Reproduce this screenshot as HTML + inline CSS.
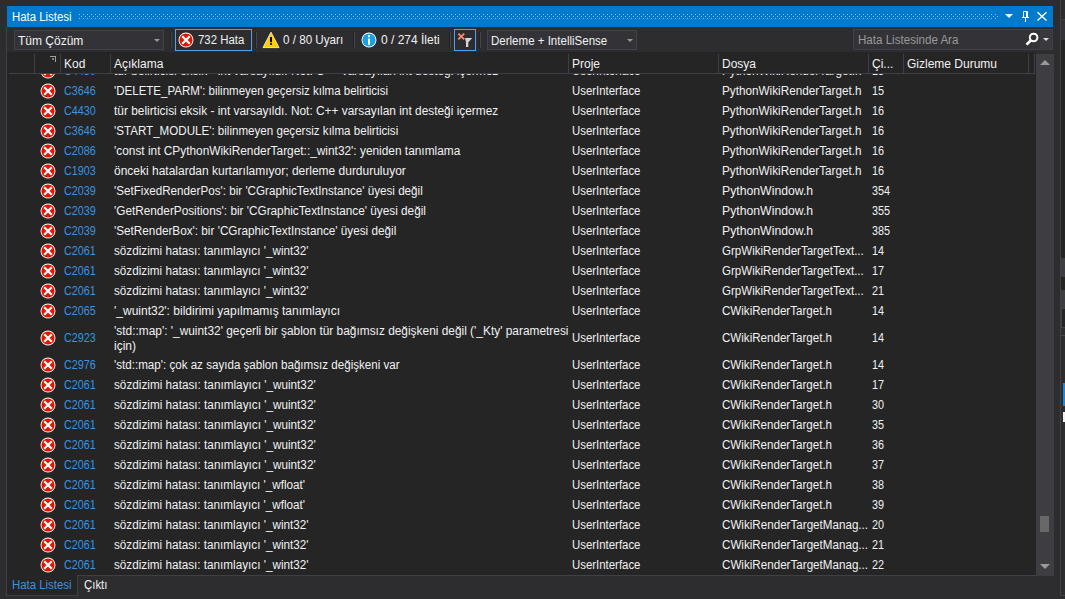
<!DOCTYPE html>
<html><head><meta charset="utf-8"><style>
html,body{margin:0;padding:0}
body{width:1065px;height:599px;overflow:hidden;background:#2D2D30;position:relative;font-family:"Liberation Sans",sans-serif;font-size:12px;color:#F1F1F1}
.abs{position:absolute}
div,span{box-sizing:border-box}
#title{position:absolute;left:7px;top:6px;width:1046px;height:21px;background:#007ACC}
#title .t{position:absolute;left:5px;top:3px;line-height:16px;color:#fff;white-space:nowrap;transform:scaleX(0.95);transform-origin:0 0}
.combo{position:absolute;background:#333337;border:1px solid #434346;height:20px}
.combo .t{position:absolute;left:3px;top:2px;line-height:17px;white-space:nowrap;transform-origin:0 0}
.arrow{position:absolute;width:0;height:0;border-left:3px solid transparent;border-right:3px solid transparent;border-top:3px solid #999}
.sep{position:absolute;top:32px;height:16px;width:2px;border-left:1px solid #222225;border-right:1px solid #46464A}
.btn{position:absolute;top:29px;height:22px;border:1px solid #4DA3F2}
.tb{position:absolute;top:33px;line-height:14px;white-space:nowrap;transform-origin:0 0}
#list{position:absolute;left:7px;top:52px;width:1029px;height:523px;background:#252526;overflow:hidden}
#rows{position:absolute;left:0;top:0;width:1029px;height:523px;overflow:hidden}
.row{position:absolute;left:0;width:1029px}
.row .c{position:absolute;top:0;line-height:20px;white-space:nowrap;transform-origin:0 0}
.row.two .c{line-height:20px;top:7px}
.row.two .desc{line-height:15px;top:3px}
.row.two .d2{top:18px}
.ic{position:absolute;left:33px;width:16px;height:16px}
.ic svg{display:block}
.code{left:57px;color:#3794E0;transform:scaleX(0.9)}
.desc{left:107px}
.proj{left:565px;transform:scaleX(0.95)}
.file{left:715px}
.line{left:865px;transform:scaleX(0.9)}
#hdr{position:absolute;left:0;top:2px;width:1029px;height:20px;background:#252526}
#hdr .h{position:absolute;top:1px;line-height:19px;white-space:nowrap}
#hdr .v{position:absolute;top:0;width:1px;height:20px;background:#3F3F46}
#hdr .b{position:absolute;left:2px;top:19px;width:1026px;height:1px;background:#3F3F46}
#sb{position:absolute;left:1036px;top:54px;width:18px;height:522px;background:#3E3E42}

</style></head><body>
<div class="abs" style="left:6px;top:27px;width:1px;height:569px;background:#3F3F46"></div>
<div id="title"><span class="t">Hata Listesi</span></div>
<svg class="abs" style="left:0;top:0" width="1065" height="30"><g fill="#8CC4EE"><rect x="79" y="14" width="1" height="1"/><rect x="83" y="14" width="1" height="1"/><rect x="87" y="14" width="1" height="1"/><rect x="91" y="14" width="1" height="1"/><rect x="95" y="14" width="1" height="1"/><rect x="99" y="14" width="1" height="1"/><rect x="103" y="14" width="1" height="1"/><rect x="107" y="14" width="1" height="1"/><rect x="111" y="14" width="1" height="1"/><rect x="115" y="14" width="1" height="1"/><rect x="119" y="14" width="1" height="1"/><rect x="123" y="14" width="1" height="1"/><rect x="127" y="14" width="1" height="1"/><rect x="131" y="14" width="1" height="1"/><rect x="135" y="14" width="1" height="1"/><rect x="139" y="14" width="1" height="1"/><rect x="143" y="14" width="1" height="1"/><rect x="147" y="14" width="1" height="1"/><rect x="151" y="14" width="1" height="1"/><rect x="155" y="14" width="1" height="1"/><rect x="159" y="14" width="1" height="1"/><rect x="163" y="14" width="1" height="1"/><rect x="167" y="14" width="1" height="1"/><rect x="171" y="14" width="1" height="1"/><rect x="175" y="14" width="1" height="1"/><rect x="179" y="14" width="1" height="1"/><rect x="183" y="14" width="1" height="1"/><rect x="187" y="14" width="1" height="1"/><rect x="191" y="14" width="1" height="1"/><rect x="195" y="14" width="1" height="1"/><rect x="199" y="14" width="1" height="1"/><rect x="203" y="14" width="1" height="1"/><rect x="207" y="14" width="1" height="1"/><rect x="211" y="14" width="1" height="1"/><rect x="215" y="14" width="1" height="1"/><rect x="219" y="14" width="1" height="1"/><rect x="223" y="14" width="1" height="1"/><rect x="227" y="14" width="1" height="1"/><rect x="231" y="14" width="1" height="1"/><rect x="235" y="14" width="1" height="1"/><rect x="239" y="14" width="1" height="1"/><rect x="243" y="14" width="1" height="1"/><rect x="247" y="14" width="1" height="1"/><rect x="251" y="14" width="1" height="1"/><rect x="255" y="14" width="1" height="1"/><rect x="259" y="14" width="1" height="1"/><rect x="263" y="14" width="1" height="1"/><rect x="267" y="14" width="1" height="1"/><rect x="271" y="14" width="1" height="1"/><rect x="275" y="14" width="1" height="1"/><rect x="279" y="14" width="1" height="1"/><rect x="283" y="14" width="1" height="1"/><rect x="287" y="14" width="1" height="1"/><rect x="291" y="14" width="1" height="1"/><rect x="295" y="14" width="1" height="1"/><rect x="299" y="14" width="1" height="1"/><rect x="303" y="14" width="1" height="1"/><rect x="307" y="14" width="1" height="1"/><rect x="311" y="14" width="1" height="1"/><rect x="315" y="14" width="1" height="1"/><rect x="319" y="14" width="1" height="1"/><rect x="323" y="14" width="1" height="1"/><rect x="327" y="14" width="1" height="1"/><rect x="331" y="14" width="1" height="1"/><rect x="335" y="14" width="1" height="1"/><rect x="339" y="14" width="1" height="1"/><rect x="343" y="14" width="1" height="1"/><rect x="347" y="14" width="1" height="1"/><rect x="351" y="14" width="1" height="1"/><rect x="355" y="14" width="1" height="1"/><rect x="359" y="14" width="1" height="1"/><rect x="363" y="14" width="1" height="1"/><rect x="367" y="14" width="1" height="1"/><rect x="371" y="14" width="1" height="1"/><rect x="375" y="14" width="1" height="1"/><rect x="379" y="14" width="1" height="1"/><rect x="383" y="14" width="1" height="1"/><rect x="387" y="14" width="1" height="1"/><rect x="391" y="14" width="1" height="1"/><rect x="395" y="14" width="1" height="1"/><rect x="399" y="14" width="1" height="1"/><rect x="403" y="14" width="1" height="1"/><rect x="407" y="14" width="1" height="1"/><rect x="411" y="14" width="1" height="1"/><rect x="415" y="14" width="1" height="1"/><rect x="419" y="14" width="1" height="1"/><rect x="423" y="14" width="1" height="1"/><rect x="427" y="14" width="1" height="1"/><rect x="431" y="14" width="1" height="1"/><rect x="435" y="14" width="1" height="1"/><rect x="439" y="14" width="1" height="1"/><rect x="443" y="14" width="1" height="1"/><rect x="447" y="14" width="1" height="1"/><rect x="451" y="14" width="1" height="1"/><rect x="455" y="14" width="1" height="1"/><rect x="459" y="14" width="1" height="1"/><rect x="463" y="14" width="1" height="1"/><rect x="467" y="14" width="1" height="1"/><rect x="471" y="14" width="1" height="1"/><rect x="475" y="14" width="1" height="1"/><rect x="479" y="14" width="1" height="1"/><rect x="483" y="14" width="1" height="1"/><rect x="487" y="14" width="1" height="1"/><rect x="491" y="14" width="1" height="1"/><rect x="495" y="14" width="1" height="1"/><rect x="499" y="14" width="1" height="1"/><rect x="503" y="14" width="1" height="1"/><rect x="507" y="14" width="1" height="1"/><rect x="511" y="14" width="1" height="1"/><rect x="515" y="14" width="1" height="1"/><rect x="519" y="14" width="1" height="1"/><rect x="523" y="14" width="1" height="1"/><rect x="527" y="14" width="1" height="1"/><rect x="531" y="14" width="1" height="1"/><rect x="535" y="14" width="1" height="1"/><rect x="539" y="14" width="1" height="1"/><rect x="543" y="14" width="1" height="1"/><rect x="547" y="14" width="1" height="1"/><rect x="551" y="14" width="1" height="1"/><rect x="555" y="14" width="1" height="1"/><rect x="559" y="14" width="1" height="1"/><rect x="563" y="14" width="1" height="1"/><rect x="567" y="14" width="1" height="1"/><rect x="571" y="14" width="1" height="1"/><rect x="575" y="14" width="1" height="1"/><rect x="579" y="14" width="1" height="1"/><rect x="583" y="14" width="1" height="1"/><rect x="587" y="14" width="1" height="1"/><rect x="591" y="14" width="1" height="1"/><rect x="595" y="14" width="1" height="1"/><rect x="599" y="14" width="1" height="1"/><rect x="603" y="14" width="1" height="1"/><rect x="607" y="14" width="1" height="1"/><rect x="611" y="14" width="1" height="1"/><rect x="615" y="14" width="1" height="1"/><rect x="619" y="14" width="1" height="1"/><rect x="623" y="14" width="1" height="1"/><rect x="627" y="14" width="1" height="1"/><rect x="631" y="14" width="1" height="1"/><rect x="635" y="14" width="1" height="1"/><rect x="639" y="14" width="1" height="1"/><rect x="643" y="14" width="1" height="1"/><rect x="647" y="14" width="1" height="1"/><rect x="651" y="14" width="1" height="1"/><rect x="655" y="14" width="1" height="1"/><rect x="659" y="14" width="1" height="1"/><rect x="663" y="14" width="1" height="1"/><rect x="667" y="14" width="1" height="1"/><rect x="671" y="14" width="1" height="1"/><rect x="675" y="14" width="1" height="1"/><rect x="679" y="14" width="1" height="1"/><rect x="683" y="14" width="1" height="1"/><rect x="687" y="14" width="1" height="1"/><rect x="691" y="14" width="1" height="1"/><rect x="695" y="14" width="1" height="1"/><rect x="699" y="14" width="1" height="1"/><rect x="703" y="14" width="1" height="1"/><rect x="707" y="14" width="1" height="1"/><rect x="711" y="14" width="1" height="1"/><rect x="715" y="14" width="1" height="1"/><rect x="719" y="14" width="1" height="1"/><rect x="723" y="14" width="1" height="1"/><rect x="727" y="14" width="1" height="1"/><rect x="731" y="14" width="1" height="1"/><rect x="735" y="14" width="1" height="1"/><rect x="739" y="14" width="1" height="1"/><rect x="743" y="14" width="1" height="1"/><rect x="747" y="14" width="1" height="1"/><rect x="751" y="14" width="1" height="1"/><rect x="755" y="14" width="1" height="1"/><rect x="759" y="14" width="1" height="1"/><rect x="763" y="14" width="1" height="1"/><rect x="767" y="14" width="1" height="1"/><rect x="771" y="14" width="1" height="1"/><rect x="775" y="14" width="1" height="1"/><rect x="779" y="14" width="1" height="1"/><rect x="783" y="14" width="1" height="1"/><rect x="787" y="14" width="1" height="1"/><rect x="791" y="14" width="1" height="1"/><rect x="795" y="14" width="1" height="1"/><rect x="799" y="14" width="1" height="1"/><rect x="803" y="14" width="1" height="1"/><rect x="807" y="14" width="1" height="1"/><rect x="811" y="14" width="1" height="1"/><rect x="815" y="14" width="1" height="1"/><rect x="819" y="14" width="1" height="1"/><rect x="823" y="14" width="1" height="1"/><rect x="827" y="14" width="1" height="1"/><rect x="831" y="14" width="1" height="1"/><rect x="835" y="14" width="1" height="1"/><rect x="839" y="14" width="1" height="1"/><rect x="843" y="14" width="1" height="1"/><rect x="847" y="14" width="1" height="1"/><rect x="851" y="14" width="1" height="1"/><rect x="855" y="14" width="1" height="1"/><rect x="859" y="14" width="1" height="1"/><rect x="863" y="14" width="1" height="1"/><rect x="867" y="14" width="1" height="1"/><rect x="871" y="14" width="1" height="1"/><rect x="875" y="14" width="1" height="1"/><rect x="879" y="14" width="1" height="1"/><rect x="883" y="14" width="1" height="1"/><rect x="887" y="14" width="1" height="1"/><rect x="891" y="14" width="1" height="1"/><rect x="895" y="14" width="1" height="1"/><rect x="899" y="14" width="1" height="1"/><rect x="903" y="14" width="1" height="1"/><rect x="907" y="14" width="1" height="1"/><rect x="911" y="14" width="1" height="1"/><rect x="915" y="14" width="1" height="1"/><rect x="919" y="14" width="1" height="1"/><rect x="923" y="14" width="1" height="1"/><rect x="927" y="14" width="1" height="1"/><rect x="931" y="14" width="1" height="1"/><rect x="935" y="14" width="1" height="1"/><rect x="939" y="14" width="1" height="1"/><rect x="943" y="14" width="1" height="1"/><rect x="947" y="14" width="1" height="1"/><rect x="951" y="14" width="1" height="1"/><rect x="955" y="14" width="1" height="1"/><rect x="959" y="14" width="1" height="1"/><rect x="963" y="14" width="1" height="1"/><rect x="967" y="14" width="1" height="1"/><rect x="971" y="14" width="1" height="1"/><rect x="975" y="14" width="1" height="1"/><rect x="979" y="14" width="1" height="1"/><rect x="983" y="14" width="1" height="1"/><rect x="987" y="14" width="1" height="1"/><rect x="991" y="14" width="1" height="1"/><rect x="995" y="14" width="1" height="1"/><rect x="81" y="16" width="1" height="1"/><rect x="85" y="16" width="1" height="1"/><rect x="89" y="16" width="1" height="1"/><rect x="93" y="16" width="1" height="1"/><rect x="97" y="16" width="1" height="1"/><rect x="101" y="16" width="1" height="1"/><rect x="105" y="16" width="1" height="1"/><rect x="109" y="16" width="1" height="1"/><rect x="113" y="16" width="1" height="1"/><rect x="117" y="16" width="1" height="1"/><rect x="121" y="16" width="1" height="1"/><rect x="125" y="16" width="1" height="1"/><rect x="129" y="16" width="1" height="1"/><rect x="133" y="16" width="1" height="1"/><rect x="137" y="16" width="1" height="1"/><rect x="141" y="16" width="1" height="1"/><rect x="145" y="16" width="1" height="1"/><rect x="149" y="16" width="1" height="1"/><rect x="153" y="16" width="1" height="1"/><rect x="157" y="16" width="1" height="1"/><rect x="161" y="16" width="1" height="1"/><rect x="165" y="16" width="1" height="1"/><rect x="169" y="16" width="1" height="1"/><rect x="173" y="16" width="1" height="1"/><rect x="177" y="16" width="1" height="1"/><rect x="181" y="16" width="1" height="1"/><rect x="185" y="16" width="1" height="1"/><rect x="189" y="16" width="1" height="1"/><rect x="193" y="16" width="1" height="1"/><rect x="197" y="16" width="1" height="1"/><rect x="201" y="16" width="1" height="1"/><rect x="205" y="16" width="1" height="1"/><rect x="209" y="16" width="1" height="1"/><rect x="213" y="16" width="1" height="1"/><rect x="217" y="16" width="1" height="1"/><rect x="221" y="16" width="1" height="1"/><rect x="225" y="16" width="1" height="1"/><rect x="229" y="16" width="1" height="1"/><rect x="233" y="16" width="1" height="1"/><rect x="237" y="16" width="1" height="1"/><rect x="241" y="16" width="1" height="1"/><rect x="245" y="16" width="1" height="1"/><rect x="249" y="16" width="1" height="1"/><rect x="253" y="16" width="1" height="1"/><rect x="257" y="16" width="1" height="1"/><rect x="261" y="16" width="1" height="1"/><rect x="265" y="16" width="1" height="1"/><rect x="269" y="16" width="1" height="1"/><rect x="273" y="16" width="1" height="1"/><rect x="277" y="16" width="1" height="1"/><rect x="281" y="16" width="1" height="1"/><rect x="285" y="16" width="1" height="1"/><rect x="289" y="16" width="1" height="1"/><rect x="293" y="16" width="1" height="1"/><rect x="297" y="16" width="1" height="1"/><rect x="301" y="16" width="1" height="1"/><rect x="305" y="16" width="1" height="1"/><rect x="309" y="16" width="1" height="1"/><rect x="313" y="16" width="1" height="1"/><rect x="317" y="16" width="1" height="1"/><rect x="321" y="16" width="1" height="1"/><rect x="325" y="16" width="1" height="1"/><rect x="329" y="16" width="1" height="1"/><rect x="333" y="16" width="1" height="1"/><rect x="337" y="16" width="1" height="1"/><rect x="341" y="16" width="1" height="1"/><rect x="345" y="16" width="1" height="1"/><rect x="349" y="16" width="1" height="1"/><rect x="353" y="16" width="1" height="1"/><rect x="357" y="16" width="1" height="1"/><rect x="361" y="16" width="1" height="1"/><rect x="365" y="16" width="1" height="1"/><rect x="369" y="16" width="1" height="1"/><rect x="373" y="16" width="1" height="1"/><rect x="377" y="16" width="1" height="1"/><rect x="381" y="16" width="1" height="1"/><rect x="385" y="16" width="1" height="1"/><rect x="389" y="16" width="1" height="1"/><rect x="393" y="16" width="1" height="1"/><rect x="397" y="16" width="1" height="1"/><rect x="401" y="16" width="1" height="1"/><rect x="405" y="16" width="1" height="1"/><rect x="409" y="16" width="1" height="1"/><rect x="413" y="16" width="1" height="1"/><rect x="417" y="16" width="1" height="1"/><rect x="421" y="16" width="1" height="1"/><rect x="425" y="16" width="1" height="1"/><rect x="429" y="16" width="1" height="1"/><rect x="433" y="16" width="1" height="1"/><rect x="437" y="16" width="1" height="1"/><rect x="441" y="16" width="1" height="1"/><rect x="445" y="16" width="1" height="1"/><rect x="449" y="16" width="1" height="1"/><rect x="453" y="16" width="1" height="1"/><rect x="457" y="16" width="1" height="1"/><rect x="461" y="16" width="1" height="1"/><rect x="465" y="16" width="1" height="1"/><rect x="469" y="16" width="1" height="1"/><rect x="473" y="16" width="1" height="1"/><rect x="477" y="16" width="1" height="1"/><rect x="481" y="16" width="1" height="1"/><rect x="485" y="16" width="1" height="1"/><rect x="489" y="16" width="1" height="1"/><rect x="493" y="16" width="1" height="1"/><rect x="497" y="16" width="1" height="1"/><rect x="501" y="16" width="1" height="1"/><rect x="505" y="16" width="1" height="1"/><rect x="509" y="16" width="1" height="1"/><rect x="513" y="16" width="1" height="1"/><rect x="517" y="16" width="1" height="1"/><rect x="521" y="16" width="1" height="1"/><rect x="525" y="16" width="1" height="1"/><rect x="529" y="16" width="1" height="1"/><rect x="533" y="16" width="1" height="1"/><rect x="537" y="16" width="1" height="1"/><rect x="541" y="16" width="1" height="1"/><rect x="545" y="16" width="1" height="1"/><rect x="549" y="16" width="1" height="1"/><rect x="553" y="16" width="1" height="1"/><rect x="557" y="16" width="1" height="1"/><rect x="561" y="16" width="1" height="1"/><rect x="565" y="16" width="1" height="1"/><rect x="569" y="16" width="1" height="1"/><rect x="573" y="16" width="1" height="1"/><rect x="577" y="16" width="1" height="1"/><rect x="581" y="16" width="1" height="1"/><rect x="585" y="16" width="1" height="1"/><rect x="589" y="16" width="1" height="1"/><rect x="593" y="16" width="1" height="1"/><rect x="597" y="16" width="1" height="1"/><rect x="601" y="16" width="1" height="1"/><rect x="605" y="16" width="1" height="1"/><rect x="609" y="16" width="1" height="1"/><rect x="613" y="16" width="1" height="1"/><rect x="617" y="16" width="1" height="1"/><rect x="621" y="16" width="1" height="1"/><rect x="625" y="16" width="1" height="1"/><rect x="629" y="16" width="1" height="1"/><rect x="633" y="16" width="1" height="1"/><rect x="637" y="16" width="1" height="1"/><rect x="641" y="16" width="1" height="1"/><rect x="645" y="16" width="1" height="1"/><rect x="649" y="16" width="1" height="1"/><rect x="653" y="16" width="1" height="1"/><rect x="657" y="16" width="1" height="1"/><rect x="661" y="16" width="1" height="1"/><rect x="665" y="16" width="1" height="1"/><rect x="669" y="16" width="1" height="1"/><rect x="673" y="16" width="1" height="1"/><rect x="677" y="16" width="1" height="1"/><rect x="681" y="16" width="1" height="1"/><rect x="685" y="16" width="1" height="1"/><rect x="689" y="16" width="1" height="1"/><rect x="693" y="16" width="1" height="1"/><rect x="697" y="16" width="1" height="1"/><rect x="701" y="16" width="1" height="1"/><rect x="705" y="16" width="1" height="1"/><rect x="709" y="16" width="1" height="1"/><rect x="713" y="16" width="1" height="1"/><rect x="717" y="16" width="1" height="1"/><rect x="721" y="16" width="1" height="1"/><rect x="725" y="16" width="1" height="1"/><rect x="729" y="16" width="1" height="1"/><rect x="733" y="16" width="1" height="1"/><rect x="737" y="16" width="1" height="1"/><rect x="741" y="16" width="1" height="1"/><rect x="745" y="16" width="1" height="1"/><rect x="749" y="16" width="1" height="1"/><rect x="753" y="16" width="1" height="1"/><rect x="757" y="16" width="1" height="1"/><rect x="761" y="16" width="1" height="1"/><rect x="765" y="16" width="1" height="1"/><rect x="769" y="16" width="1" height="1"/><rect x="773" y="16" width="1" height="1"/><rect x="777" y="16" width="1" height="1"/><rect x="781" y="16" width="1" height="1"/><rect x="785" y="16" width="1" height="1"/><rect x="789" y="16" width="1" height="1"/><rect x="793" y="16" width="1" height="1"/><rect x="797" y="16" width="1" height="1"/><rect x="801" y="16" width="1" height="1"/><rect x="805" y="16" width="1" height="1"/><rect x="809" y="16" width="1" height="1"/><rect x="813" y="16" width="1" height="1"/><rect x="817" y="16" width="1" height="1"/><rect x="821" y="16" width="1" height="1"/><rect x="825" y="16" width="1" height="1"/><rect x="829" y="16" width="1" height="1"/><rect x="833" y="16" width="1" height="1"/><rect x="837" y="16" width="1" height="1"/><rect x="841" y="16" width="1" height="1"/><rect x="845" y="16" width="1" height="1"/><rect x="849" y="16" width="1" height="1"/><rect x="853" y="16" width="1" height="1"/><rect x="857" y="16" width="1" height="1"/><rect x="861" y="16" width="1" height="1"/><rect x="865" y="16" width="1" height="1"/><rect x="869" y="16" width="1" height="1"/><rect x="873" y="16" width="1" height="1"/><rect x="877" y="16" width="1" height="1"/><rect x="881" y="16" width="1" height="1"/><rect x="885" y="16" width="1" height="1"/><rect x="889" y="16" width="1" height="1"/><rect x="893" y="16" width="1" height="1"/><rect x="897" y="16" width="1" height="1"/><rect x="901" y="16" width="1" height="1"/><rect x="905" y="16" width="1" height="1"/><rect x="909" y="16" width="1" height="1"/><rect x="913" y="16" width="1" height="1"/><rect x="917" y="16" width="1" height="1"/><rect x="921" y="16" width="1" height="1"/><rect x="925" y="16" width="1" height="1"/><rect x="929" y="16" width="1" height="1"/><rect x="933" y="16" width="1" height="1"/><rect x="937" y="16" width="1" height="1"/><rect x="941" y="16" width="1" height="1"/><rect x="945" y="16" width="1" height="1"/><rect x="949" y="16" width="1" height="1"/><rect x="953" y="16" width="1" height="1"/><rect x="957" y="16" width="1" height="1"/><rect x="961" y="16" width="1" height="1"/><rect x="965" y="16" width="1" height="1"/><rect x="969" y="16" width="1" height="1"/><rect x="973" y="16" width="1" height="1"/><rect x="977" y="16" width="1" height="1"/><rect x="981" y="16" width="1" height="1"/><rect x="985" y="16" width="1" height="1"/><rect x="989" y="16" width="1" height="1"/><rect x="993" y="16" width="1" height="1"/><rect x="997" y="16" width="1" height="1"/><rect x="79" y="18" width="1" height="1"/><rect x="83" y="18" width="1" height="1"/><rect x="87" y="18" width="1" height="1"/><rect x="91" y="18" width="1" height="1"/><rect x="95" y="18" width="1" height="1"/><rect x="99" y="18" width="1" height="1"/><rect x="103" y="18" width="1" height="1"/><rect x="107" y="18" width="1" height="1"/><rect x="111" y="18" width="1" height="1"/><rect x="115" y="18" width="1" height="1"/><rect x="119" y="18" width="1" height="1"/><rect x="123" y="18" width="1" height="1"/><rect x="127" y="18" width="1" height="1"/><rect x="131" y="18" width="1" height="1"/><rect x="135" y="18" width="1" height="1"/><rect x="139" y="18" width="1" height="1"/><rect x="143" y="18" width="1" height="1"/><rect x="147" y="18" width="1" height="1"/><rect x="151" y="18" width="1" height="1"/><rect x="155" y="18" width="1" height="1"/><rect x="159" y="18" width="1" height="1"/><rect x="163" y="18" width="1" height="1"/><rect x="167" y="18" width="1" height="1"/><rect x="171" y="18" width="1" height="1"/><rect x="175" y="18" width="1" height="1"/><rect x="179" y="18" width="1" height="1"/><rect x="183" y="18" width="1" height="1"/><rect x="187" y="18" width="1" height="1"/><rect x="191" y="18" width="1" height="1"/><rect x="195" y="18" width="1" height="1"/><rect x="199" y="18" width="1" height="1"/><rect x="203" y="18" width="1" height="1"/><rect x="207" y="18" width="1" height="1"/><rect x="211" y="18" width="1" height="1"/><rect x="215" y="18" width="1" height="1"/><rect x="219" y="18" width="1" height="1"/><rect x="223" y="18" width="1" height="1"/><rect x="227" y="18" width="1" height="1"/><rect x="231" y="18" width="1" height="1"/><rect x="235" y="18" width="1" height="1"/><rect x="239" y="18" width="1" height="1"/><rect x="243" y="18" width="1" height="1"/><rect x="247" y="18" width="1" height="1"/><rect x="251" y="18" width="1" height="1"/><rect x="255" y="18" width="1" height="1"/><rect x="259" y="18" width="1" height="1"/><rect x="263" y="18" width="1" height="1"/><rect x="267" y="18" width="1" height="1"/><rect x="271" y="18" width="1" height="1"/><rect x="275" y="18" width="1" height="1"/><rect x="279" y="18" width="1" height="1"/><rect x="283" y="18" width="1" height="1"/><rect x="287" y="18" width="1" height="1"/><rect x="291" y="18" width="1" height="1"/><rect x="295" y="18" width="1" height="1"/><rect x="299" y="18" width="1" height="1"/><rect x="303" y="18" width="1" height="1"/><rect x="307" y="18" width="1" height="1"/><rect x="311" y="18" width="1" height="1"/><rect x="315" y="18" width="1" height="1"/><rect x="319" y="18" width="1" height="1"/><rect x="323" y="18" width="1" height="1"/><rect x="327" y="18" width="1" height="1"/><rect x="331" y="18" width="1" height="1"/><rect x="335" y="18" width="1" height="1"/><rect x="339" y="18" width="1" height="1"/><rect x="343" y="18" width="1" height="1"/><rect x="347" y="18" width="1" height="1"/><rect x="351" y="18" width="1" height="1"/><rect x="355" y="18" width="1" height="1"/><rect x="359" y="18" width="1" height="1"/><rect x="363" y="18" width="1" height="1"/><rect x="367" y="18" width="1" height="1"/><rect x="371" y="18" width="1" height="1"/><rect x="375" y="18" width="1" height="1"/><rect x="379" y="18" width="1" height="1"/><rect x="383" y="18" width="1" height="1"/><rect x="387" y="18" width="1" height="1"/><rect x="391" y="18" width="1" height="1"/><rect x="395" y="18" width="1" height="1"/><rect x="399" y="18" width="1" height="1"/><rect x="403" y="18" width="1" height="1"/><rect x="407" y="18" width="1" height="1"/><rect x="411" y="18" width="1" height="1"/><rect x="415" y="18" width="1" height="1"/><rect x="419" y="18" width="1" height="1"/><rect x="423" y="18" width="1" height="1"/><rect x="427" y="18" width="1" height="1"/><rect x="431" y="18" width="1" height="1"/><rect x="435" y="18" width="1" height="1"/><rect x="439" y="18" width="1" height="1"/><rect x="443" y="18" width="1" height="1"/><rect x="447" y="18" width="1" height="1"/><rect x="451" y="18" width="1" height="1"/><rect x="455" y="18" width="1" height="1"/><rect x="459" y="18" width="1" height="1"/><rect x="463" y="18" width="1" height="1"/><rect x="467" y="18" width="1" height="1"/><rect x="471" y="18" width="1" height="1"/><rect x="475" y="18" width="1" height="1"/><rect x="479" y="18" width="1" height="1"/><rect x="483" y="18" width="1" height="1"/><rect x="487" y="18" width="1" height="1"/><rect x="491" y="18" width="1" height="1"/><rect x="495" y="18" width="1" height="1"/><rect x="499" y="18" width="1" height="1"/><rect x="503" y="18" width="1" height="1"/><rect x="507" y="18" width="1" height="1"/><rect x="511" y="18" width="1" height="1"/><rect x="515" y="18" width="1" height="1"/><rect x="519" y="18" width="1" height="1"/><rect x="523" y="18" width="1" height="1"/><rect x="527" y="18" width="1" height="1"/><rect x="531" y="18" width="1" height="1"/><rect x="535" y="18" width="1" height="1"/><rect x="539" y="18" width="1" height="1"/><rect x="543" y="18" width="1" height="1"/><rect x="547" y="18" width="1" height="1"/><rect x="551" y="18" width="1" height="1"/><rect x="555" y="18" width="1" height="1"/><rect x="559" y="18" width="1" height="1"/><rect x="563" y="18" width="1" height="1"/><rect x="567" y="18" width="1" height="1"/><rect x="571" y="18" width="1" height="1"/><rect x="575" y="18" width="1" height="1"/><rect x="579" y="18" width="1" height="1"/><rect x="583" y="18" width="1" height="1"/><rect x="587" y="18" width="1" height="1"/><rect x="591" y="18" width="1" height="1"/><rect x="595" y="18" width="1" height="1"/><rect x="599" y="18" width="1" height="1"/><rect x="603" y="18" width="1" height="1"/><rect x="607" y="18" width="1" height="1"/><rect x="611" y="18" width="1" height="1"/><rect x="615" y="18" width="1" height="1"/><rect x="619" y="18" width="1" height="1"/><rect x="623" y="18" width="1" height="1"/><rect x="627" y="18" width="1" height="1"/><rect x="631" y="18" width="1" height="1"/><rect x="635" y="18" width="1" height="1"/><rect x="639" y="18" width="1" height="1"/><rect x="643" y="18" width="1" height="1"/><rect x="647" y="18" width="1" height="1"/><rect x="651" y="18" width="1" height="1"/><rect x="655" y="18" width="1" height="1"/><rect x="659" y="18" width="1" height="1"/><rect x="663" y="18" width="1" height="1"/><rect x="667" y="18" width="1" height="1"/><rect x="671" y="18" width="1" height="1"/><rect x="675" y="18" width="1" height="1"/><rect x="679" y="18" width="1" height="1"/><rect x="683" y="18" width="1" height="1"/><rect x="687" y="18" width="1" height="1"/><rect x="691" y="18" width="1" height="1"/><rect x="695" y="18" width="1" height="1"/><rect x="699" y="18" width="1" height="1"/><rect x="703" y="18" width="1" height="1"/><rect x="707" y="18" width="1" height="1"/><rect x="711" y="18" width="1" height="1"/><rect x="715" y="18" width="1" height="1"/><rect x="719" y="18" width="1" height="1"/><rect x="723" y="18" width="1" height="1"/><rect x="727" y="18" width="1" height="1"/><rect x="731" y="18" width="1" height="1"/><rect x="735" y="18" width="1" height="1"/><rect x="739" y="18" width="1" height="1"/><rect x="743" y="18" width="1" height="1"/><rect x="747" y="18" width="1" height="1"/><rect x="751" y="18" width="1" height="1"/><rect x="755" y="18" width="1" height="1"/><rect x="759" y="18" width="1" height="1"/><rect x="763" y="18" width="1" height="1"/><rect x="767" y="18" width="1" height="1"/><rect x="771" y="18" width="1" height="1"/><rect x="775" y="18" width="1" height="1"/><rect x="779" y="18" width="1" height="1"/><rect x="783" y="18" width="1" height="1"/><rect x="787" y="18" width="1" height="1"/><rect x="791" y="18" width="1" height="1"/><rect x="795" y="18" width="1" height="1"/><rect x="799" y="18" width="1" height="1"/><rect x="803" y="18" width="1" height="1"/><rect x="807" y="18" width="1" height="1"/><rect x="811" y="18" width="1" height="1"/><rect x="815" y="18" width="1" height="1"/><rect x="819" y="18" width="1" height="1"/><rect x="823" y="18" width="1" height="1"/><rect x="827" y="18" width="1" height="1"/><rect x="831" y="18" width="1" height="1"/><rect x="835" y="18" width="1" height="1"/><rect x="839" y="18" width="1" height="1"/><rect x="843" y="18" width="1" height="1"/><rect x="847" y="18" width="1" height="1"/><rect x="851" y="18" width="1" height="1"/><rect x="855" y="18" width="1" height="1"/><rect x="859" y="18" width="1" height="1"/><rect x="863" y="18" width="1" height="1"/><rect x="867" y="18" width="1" height="1"/><rect x="871" y="18" width="1" height="1"/><rect x="875" y="18" width="1" height="1"/><rect x="879" y="18" width="1" height="1"/><rect x="883" y="18" width="1" height="1"/><rect x="887" y="18" width="1" height="1"/><rect x="891" y="18" width="1" height="1"/><rect x="895" y="18" width="1" height="1"/><rect x="899" y="18" width="1" height="1"/><rect x="903" y="18" width="1" height="1"/><rect x="907" y="18" width="1" height="1"/><rect x="911" y="18" width="1" height="1"/><rect x="915" y="18" width="1" height="1"/><rect x="919" y="18" width="1" height="1"/><rect x="923" y="18" width="1" height="1"/><rect x="927" y="18" width="1" height="1"/><rect x="931" y="18" width="1" height="1"/><rect x="935" y="18" width="1" height="1"/><rect x="939" y="18" width="1" height="1"/><rect x="943" y="18" width="1" height="1"/><rect x="947" y="18" width="1" height="1"/><rect x="951" y="18" width="1" height="1"/><rect x="955" y="18" width="1" height="1"/><rect x="959" y="18" width="1" height="1"/><rect x="963" y="18" width="1" height="1"/><rect x="967" y="18" width="1" height="1"/><rect x="971" y="18" width="1" height="1"/><rect x="975" y="18" width="1" height="1"/><rect x="979" y="18" width="1" height="1"/><rect x="983" y="18" width="1" height="1"/><rect x="987" y="18" width="1" height="1"/><rect x="991" y="18" width="1" height="1"/><rect x="995" y="18" width="1" height="1"/></g></svg>
<!-- title icons -->
<div class="abs" style="left:1005px;top:14px;width:0;height:0;border-left:4px solid transparent;border-right:4px solid transparent;border-top:4px solid #fff"></div>
<svg class="abs" style="left:1020px;top:9px" width="12" height="15" viewBox="0 0 12 15"><path d="M3.5 2.5H7.5V8.5H3.5Z" fill="none" stroke="#fff" stroke-width="1"/><path d="M2 8.5H9" stroke="#fff" stroke-width="1"/><path d="M5.5 8.5V13" stroke="#fff" stroke-width="1"/><path d="M6.5 3V8" stroke="#fff" stroke-width="1"/></svg>
<svg class="abs" style="left:1036px;top:11px" width="12" height="11" viewBox="0 0 12 11"><path d="M1.5 1.2L10.5 9.4M10.5 1.2L1.5 9.4" stroke="#fff" stroke-width="1.4"/></svg>

<!-- toolbar -->
<div class="combo" style="left:14px;top:30px;width:150px"><span class="t">Tüm Çözüm</span><div class="arrow" style="left:139px;top:8px"></div></div>
<div class="sep" style="left:170px"></div>
<div class="btn" style="left:175px;width:77px"></div>
<span class="abs" style="left:178px;top:32px"><svg width="16" height="16" viewBox="0 0 16 16"><circle cx="8" cy="8" r="7.5" fill="#fff"/><circle cx="8" cy="8" r="6.6" fill="#E41400"/><path d="M5 5L11 11M11 5L5 11" stroke="#fff" stroke-width="2.2" stroke-linecap="square"/></svg></span>
<span class="tb" style="left:198px;transform:scaleX(0.95)">732 Hata</span>
<div class="sep" style="left:255px"></div>
<svg class="abs" style="left:262px;top:31px" width="18" height="18" viewBox="0 0 18 18"><path d="M9 1.2L17 16.6H1Z" fill="#FFCC00" stroke="#FFF3B0" stroke-width="0.9" stroke-linejoin="round"/><rect x="8" y="6" width="2" height="5.2" fill="#000"/><rect x="8" y="12.2" width="2" height="1.6" fill="#000"/></svg>
<span class="tb" style="left:283px;transform:scaleX(0.97)">0 / 80 Uyarı</span>
<div class="sep" style="left:353px"></div>
<svg class="abs" style="left:361px;top:32px" width="16" height="16" viewBox="0 0 16 16"><circle cx="8" cy="8" r="7.5" fill="#fff"/><circle cx="8" cy="8" r="6.6" fill="#1BA1E2"/><rect x="7" y="3.2" width="2" height="2" fill="#fff"/><rect x="7" y="6.6" width="2" height="6.2" fill="#fff"/></svg>
<span class="tb" style="left:381px">0 / 274 İleti</span>
<div class="sep" style="left:449px"></div>
<div class="btn" style="left:454px;width:22px"></div>
<svg class="abs" style="left:455px;top:30px" width="20" height="20" viewBox="0 0 20 20"><path d="M3.3 3.6L9.2 9.4M9.2 3.6L3.3 9.4" stroke="#F48771" stroke-width="2"/><path d="M10 8H17.2L13.3 12.2V17H11V12.2Z" fill="#D4D4D4"/></svg>
<div class="sep" style="left:479px"></div>
<div class="combo" style="left:487px;top:30px;width:150px"><span class="t" style="transform:scaleX(0.96)">Derleme + IntelliSense</span><div class="arrow" style="left:139px;top:8px"></div></div>

<div class="abs" style="left:853px;top:29px;width:200px;height:21px;background:#333337;border:1px solid #3F3F46"></div>
<span class="abs" style="left:858px;top:32px;line-height:16px;color:#999;transform:scaleX(0.965);transform-origin:0 0">Hata Listesinde Ara</span>
<svg class="abs" style="left:1024px;top:31px" width="16" height="16" viewBox="0 0 16 16"><circle cx="9.6" cy="6.5" r="3.8" fill="none" stroke="#fff" stroke-width="2"/><path d="M7 9.2L2.5 13.6" stroke="#fff" stroke-width="2.6"/></svg>
<div class="abs" style="left:1040px;top:30px;width:12px;height:19px;background:#3A3A3E"></div>
<div class="arrow" style="left:1043px;top:38px;border-left-width:3px;border-right-width:3px;border-top:3px solid #ddd"></div>

<!-- list -->
<div id="list">
  <div id="rows">
<div class="row" style="top:9px;height:20px"><span class="ic" style="top:2px"><svg width="16" height="16" viewBox="0 0 16 16"><circle cx="8" cy="8" r="7.5" fill="#fff"/><circle cx="8" cy="8" r="6.6" fill="#E41400"/><path d="M5 5L11 11M11 5L5 11" stroke="#fff" stroke-width="2.2" stroke-linecap="square"/></svg></span><span class="c code">C4430</span><span class="c desc" style="transform:scaleX(0.99)">tür belirticisi eksik - int varsayıldı. Not: C++ varsayılan int desteği içermez</span><span class="c proj">UserInterface</span><span class="c file" style="transform:scaleX(0.978)">PythonWikiRenderTarget.h</span><span class="c line">15</span></div>
<div class="row" style="top:29px;height:20px"><span class="ic" style="top:2px"><svg width="16" height="16" viewBox="0 0 16 16"><circle cx="8" cy="8" r="7.5" fill="#fff"/><circle cx="8" cy="8" r="6.6" fill="#E41400"/><path d="M5 5L11 11M11 5L5 11" stroke="#fff" stroke-width="2.2" stroke-linecap="square"/></svg></span><span class="c code">C3646</span><span class="c desc" style="transform:scaleX(0.961)">&#x27;DELETE_PARM&#x27;: bilinmeyen geçersiz kılma belirticisi</span><span class="c proj">UserInterface</span><span class="c file" style="transform:scaleX(0.978)">PythonWikiRenderTarget.h</span><span class="c line">15</span></div>
<div class="row" style="top:49px;height:20px"><span class="ic" style="top:2px"><svg width="16" height="16" viewBox="0 0 16 16"><circle cx="8" cy="8" r="7.5" fill="#fff"/><circle cx="8" cy="8" r="6.6" fill="#E41400"/><path d="M5 5L11 11M11 5L5 11" stroke="#fff" stroke-width="2.2" stroke-linecap="square"/></svg></span><span class="c code">C4430</span><span class="c desc" style="transform:scaleX(0.99)">tür belirticisi eksik - int varsayıldı. Not: C++ varsayılan int desteği içermez</span><span class="c proj">UserInterface</span><span class="c file" style="transform:scaleX(0.978)">PythonWikiRenderTarget.h</span><span class="c line">16</span></div>
<div class="row" style="top:69px;height:20px"><span class="ic" style="top:2px"><svg width="16" height="16" viewBox="0 0 16 16"><circle cx="8" cy="8" r="7.5" fill="#fff"/><circle cx="8" cy="8" r="6.6" fill="#E41400"/><path d="M5 5L11 11M11 5L5 11" stroke="#fff" stroke-width="2.2" stroke-linecap="square"/></svg></span><span class="c code">C3646</span><span class="c desc" style="transform:scaleX(0.966)">&#x27;START_MODULE&#x27;: bilinmeyen geçersiz kılma belirticisi</span><span class="c proj">UserInterface</span><span class="c file" style="transform:scaleX(0.978)">PythonWikiRenderTarget.h</span><span class="c line">16</span></div>
<div class="row" style="top:89px;height:20px"><span class="ic" style="top:2px"><svg width="16" height="16" viewBox="0 0 16 16"><circle cx="8" cy="8" r="7.5" fill="#fff"/><circle cx="8" cy="8" r="6.6" fill="#E41400"/><path d="M5 5L11 11M11 5L5 11" stroke="#fff" stroke-width="2.2" stroke-linecap="square"/></svg></span><span class="c code">C2086</span><span class="c desc" style="transform:scaleX(0.989)">&#x27;const int CPythonWikiRenderTarget::_wint32&#x27;: yeniden tanımlama</span><span class="c proj">UserInterface</span><span class="c file" style="transform:scaleX(0.978)">PythonWikiRenderTarget.h</span><span class="c line">16</span></div>
<div class="row" style="top:109px;height:20px"><span class="ic" style="top:2px"><svg width="16" height="16" viewBox="0 0 16 16"><circle cx="8" cy="8" r="7.5" fill="#fff"/><circle cx="8" cy="8" r="6.6" fill="#E41400"/><path d="M5 5L11 11M11 5L5 11" stroke="#fff" stroke-width="2.2" stroke-linecap="square"/></svg></span><span class="c code">C1903</span><span class="c desc" style="transform:scaleX(0.999)">önceki hatalardan kurtarılamıyor; derleme durduruluyor</span><span class="c proj">UserInterface</span><span class="c file" style="transform:scaleX(0.978)">PythonWikiRenderTarget.h</span><span class="c line">16</span></div>
<div class="row" style="top:129px;height:20px"><span class="ic" style="top:2px"><svg width="16" height="16" viewBox="0 0 16 16"><circle cx="8" cy="8" r="7.5" fill="#fff"/><circle cx="8" cy="8" r="6.6" fill="#E41400"/><path d="M5 5L11 11M11 5L5 11" stroke="#fff" stroke-width="2.2" stroke-linecap="square"/></svg></span><span class="c code">C2039</span><span class="c desc" style="transform:scaleX(0.971)">&#x27;SetFixedRenderPos&#x27;: bir &#x27;CGraphicTextInstance&#x27; üyesi değil</span><span class="c proj">UserInterface</span><span class="c file" style="transform:scaleX(1.02)">PythonWindow.h</span><span class="c line">354</span></div>
<div class="row" style="top:149px;height:20px"><span class="ic" style="top:2px"><svg width="16" height="16" viewBox="0 0 16 16"><circle cx="8" cy="8" r="7.5" fill="#fff"/><circle cx="8" cy="8" r="6.6" fill="#E41400"/><path d="M5 5L11 11M11 5L5 11" stroke="#fff" stroke-width="2.2" stroke-linecap="square"/></svg></span><span class="c code">C2039</span><span class="c desc" style="transform:scaleX(0.981)">&#x27;GetRenderPositions&#x27;: bir &#x27;CGraphicTextInstance&#x27; üyesi değil</span><span class="c proj">UserInterface</span><span class="c file" style="transform:scaleX(1.02)">PythonWindow.h</span><span class="c line">355</span></div>
<div class="row" style="top:169px;height:20px"><span class="ic" style="top:2px"><svg width="16" height="16" viewBox="0 0 16 16"><circle cx="8" cy="8" r="7.5" fill="#fff"/><circle cx="8" cy="8" r="6.6" fill="#E41400"/><path d="M5 5L11 11M11 5L5 11" stroke="#fff" stroke-width="2.2" stroke-linecap="square"/></svg></span><span class="c code">C2039</span><span class="c desc" style="transform:scaleX(0.978)">&#x27;SetRenderBox&#x27;: bir &#x27;CGraphicTextInstance&#x27; üyesi değil</span><span class="c proj">UserInterface</span><span class="c file" style="transform:scaleX(1.02)">PythonWindow.h</span><span class="c line">385</span></div>
<div class="row" style="top:189px;height:20px"><span class="ic" style="top:2px"><svg width="16" height="16" viewBox="0 0 16 16"><circle cx="8" cy="8" r="7.5" fill="#fff"/><circle cx="8" cy="8" r="6.6" fill="#E41400"/><path d="M5 5L11 11M11 5L5 11" stroke="#fff" stroke-width="2.2" stroke-linecap="square"/></svg></span><span class="c code">C2061</span><span class="c desc" style="transform:scaleX(0.976)">sözdizimi hatası: tanımlayıcı &#x27;_wint32&#x27;</span><span class="c proj">UserInterface</span><span class="c file" style="transform:scaleX(0.962)">GrpWikiRenderTargetText...</span><span class="c line">14</span></div>
<div class="row" style="top:209px;height:20px"><span class="ic" style="top:2px"><svg width="16" height="16" viewBox="0 0 16 16"><circle cx="8" cy="8" r="7.5" fill="#fff"/><circle cx="8" cy="8" r="6.6" fill="#E41400"/><path d="M5 5L11 11M11 5L5 11" stroke="#fff" stroke-width="2.2" stroke-linecap="square"/></svg></span><span class="c code">C2061</span><span class="c desc" style="transform:scaleX(0.976)">sözdizimi hatası: tanımlayıcı &#x27;_wint32&#x27;</span><span class="c proj">UserInterface</span><span class="c file" style="transform:scaleX(0.962)">GrpWikiRenderTargetText...</span><span class="c line">17</span></div>
<div class="row" style="top:229px;height:20px"><span class="ic" style="top:2px"><svg width="16" height="16" viewBox="0 0 16 16"><circle cx="8" cy="8" r="7.5" fill="#fff"/><circle cx="8" cy="8" r="6.6" fill="#E41400"/><path d="M5 5L11 11M11 5L5 11" stroke="#fff" stroke-width="2.2" stroke-linecap="square"/></svg></span><span class="c code">C2061</span><span class="c desc" style="transform:scaleX(0.976)">sözdizimi hatası: tanımlayıcı &#x27;_wint32&#x27;</span><span class="c proj">UserInterface</span><span class="c file" style="transform:scaleX(0.962)">GrpWikiRenderTargetText...</span><span class="c line">21</span></div>
<div class="row" style="top:249px;height:20px"><span class="ic" style="top:2px"><svg width="16" height="16" viewBox="0 0 16 16"><circle cx="8" cy="8" r="7.5" fill="#fff"/><circle cx="8" cy="8" r="6.6" fill="#E41400"/><path d="M5 5L11 11M11 5L5 11" stroke="#fff" stroke-width="2.2" stroke-linecap="square"/></svg></span><span class="c code">C2065</span><span class="c desc" style="transform:scaleX(1.0)">&#x27;_wuint32&#x27;: bildirimi yapılmamış tanımlayıcı</span><span class="c proj">UserInterface</span><span class="c file" style="transform:scaleX(0.965)">CWikiRenderTarget.h</span><span class="c line">14</span></div>
<div class="row two" style="top:269px;height:34px"><span class="ic" style="top:9px"><svg width="16" height="16" viewBox="0 0 16 16"><circle cx="8" cy="8" r="7.5" fill="#fff"/><circle cx="8" cy="8" r="6.6" fill="#E41400"/><path d="M5 5L11 11M11 5L5 11" stroke="#fff" stroke-width="2.2" stroke-linecap="square"/></svg></span><span class="c code">C2923</span><span class="c desc" style="transform:scaleX(0.991)">&#x27;std::map&#x27;: &#x27;_wuint32&#x27; geçerli bir şablon tür bağımsız değişkeni değil (&#x27;_Kty&#x27; parametresi</span><span class="c desc d2">için)</span><span class="c proj">UserInterface</span><span class="c file" style="transform:scaleX(0.965)">CWikiRenderTarget.h</span><span class="c line">14</span></div>
<div class="row" style="top:303px;height:20px"><span class="ic" style="top:2px"><svg width="16" height="16" viewBox="0 0 16 16"><circle cx="8" cy="8" r="7.5" fill="#fff"/><circle cx="8" cy="8" r="6.6" fill="#E41400"/><path d="M5 5L11 11M11 5L5 11" stroke="#fff" stroke-width="2.2" stroke-linecap="square"/></svg></span><span class="c code">C2976</span><span class="c desc" style="transform:scaleX(0.967)">&#x27;std::map&#x27;: çok az sayıda şablon bağımsız değişkeni var</span><span class="c proj">UserInterface</span><span class="c file" style="transform:scaleX(0.965)">CWikiRenderTarget.h</span><span class="c line">14</span></div>
<div class="row" style="top:323px;height:20px"><span class="ic" style="top:2px"><svg width="16" height="16" viewBox="0 0 16 16"><circle cx="8" cy="8" r="7.5" fill="#fff"/><circle cx="8" cy="8" r="6.6" fill="#E41400"/><path d="M5 5L11 11M11 5L5 11" stroke="#fff" stroke-width="2.2" stroke-linecap="square"/></svg></span><span class="c code">C2061</span><span class="c desc" style="transform:scaleX(0.979)">sözdizimi hatası: tanımlayıcı &#x27;_wuint32&#x27;</span><span class="c proj">UserInterface</span><span class="c file" style="transform:scaleX(0.965)">CWikiRenderTarget.h</span><span class="c line">17</span></div>
<div class="row" style="top:343px;height:20px"><span class="ic" style="top:2px"><svg width="16" height="16" viewBox="0 0 16 16"><circle cx="8" cy="8" r="7.5" fill="#fff"/><circle cx="8" cy="8" r="6.6" fill="#E41400"/><path d="M5 5L11 11M11 5L5 11" stroke="#fff" stroke-width="2.2" stroke-linecap="square"/></svg></span><span class="c code">C2061</span><span class="c desc" style="transform:scaleX(0.979)">sözdizimi hatası: tanımlayıcı &#x27;_wuint32&#x27;</span><span class="c proj">UserInterface</span><span class="c file" style="transform:scaleX(0.965)">CWikiRenderTarget.h</span><span class="c line">30</span></div>
<div class="row" style="top:363px;height:20px"><span class="ic" style="top:2px"><svg width="16" height="16" viewBox="0 0 16 16"><circle cx="8" cy="8" r="7.5" fill="#fff"/><circle cx="8" cy="8" r="6.6" fill="#E41400"/><path d="M5 5L11 11M11 5L5 11" stroke="#fff" stroke-width="2.2" stroke-linecap="square"/></svg></span><span class="c code">C2061</span><span class="c desc" style="transform:scaleX(0.979)">sözdizimi hatası: tanımlayıcı &#x27;_wuint32&#x27;</span><span class="c proj">UserInterface</span><span class="c file" style="transform:scaleX(0.965)">CWikiRenderTarget.h</span><span class="c line">35</span></div>
<div class="row" style="top:383px;height:20px"><span class="ic" style="top:2px"><svg width="16" height="16" viewBox="0 0 16 16"><circle cx="8" cy="8" r="7.5" fill="#fff"/><circle cx="8" cy="8" r="6.6" fill="#E41400"/><path d="M5 5L11 11M11 5L5 11" stroke="#fff" stroke-width="2.2" stroke-linecap="square"/></svg></span><span class="c code">C2061</span><span class="c desc" style="transform:scaleX(0.979)">sözdizimi hatası: tanımlayıcı &#x27;_wuint32&#x27;</span><span class="c proj">UserInterface</span><span class="c file" style="transform:scaleX(0.965)">CWikiRenderTarget.h</span><span class="c line">36</span></div>
<div class="row" style="top:403px;height:20px"><span class="ic" style="top:2px"><svg width="16" height="16" viewBox="0 0 16 16"><circle cx="8" cy="8" r="7.5" fill="#fff"/><circle cx="8" cy="8" r="6.6" fill="#E41400"/><path d="M5 5L11 11M11 5L5 11" stroke="#fff" stroke-width="2.2" stroke-linecap="square"/></svg></span><span class="c code">C2061</span><span class="c desc" style="transform:scaleX(0.979)">sözdizimi hatası: tanımlayıcı &#x27;_wuint32&#x27;</span><span class="c proj">UserInterface</span><span class="c file" style="transform:scaleX(0.965)">CWikiRenderTarget.h</span><span class="c line">37</span></div>
<div class="row" style="top:423px;height:20px"><span class="ic" style="top:2px"><svg width="16" height="16" viewBox="0 0 16 16"><circle cx="8" cy="8" r="7.5" fill="#fff"/><circle cx="8" cy="8" r="6.6" fill="#E41400"/><path d="M5 5L11 11M11 5L5 11" stroke="#fff" stroke-width="2.2" stroke-linecap="square"/></svg></span><span class="c code">C2061</span><span class="c desc" style="transform:scaleX(0.975)">sözdizimi hatası: tanımlayıcı &#x27;_wfloat&#x27;</span><span class="c proj">UserInterface</span><span class="c file" style="transform:scaleX(0.965)">CWikiRenderTarget.h</span><span class="c line">38</span></div>
<div class="row" style="top:443px;height:20px"><span class="ic" style="top:2px"><svg width="16" height="16" viewBox="0 0 16 16"><circle cx="8" cy="8" r="7.5" fill="#fff"/><circle cx="8" cy="8" r="6.6" fill="#E41400"/><path d="M5 5L11 11M11 5L5 11" stroke="#fff" stroke-width="2.2" stroke-linecap="square"/></svg></span><span class="c code">C2061</span><span class="c desc" style="transform:scaleX(0.975)">sözdizimi hatası: tanımlayıcı &#x27;_wfloat&#x27;</span><span class="c proj">UserInterface</span><span class="c file" style="transform:scaleX(0.965)">CWikiRenderTarget.h</span><span class="c line">39</span></div>
<div class="row" style="top:463px;height:20px"><span class="ic" style="top:2px"><svg width="16" height="16" viewBox="0 0 16 16"><circle cx="8" cy="8" r="7.5" fill="#fff"/><circle cx="8" cy="8" r="6.6" fill="#E41400"/><path d="M5 5L11 11M11 5L5 11" stroke="#fff" stroke-width="2.2" stroke-linecap="square"/></svg></span><span class="c code">C2061</span><span class="c desc" style="transform:scaleX(0.976)">sözdizimi hatası: tanımlayıcı &#x27;_wint32&#x27;</span><span class="c proj">UserInterface</span><span class="c file" style="transform:scaleX(0.969)">CWikiRenderTargetManag...</span><span class="c line">20</span></div>
<div class="row" style="top:483px;height:20px"><span class="ic" style="top:2px"><svg width="16" height="16" viewBox="0 0 16 16"><circle cx="8" cy="8" r="7.5" fill="#fff"/><circle cx="8" cy="8" r="6.6" fill="#E41400"/><path d="M5 5L11 11M11 5L5 11" stroke="#fff" stroke-width="2.2" stroke-linecap="square"/></svg></span><span class="c code">C2061</span><span class="c desc" style="transform:scaleX(0.976)">sözdizimi hatası: tanımlayıcı &#x27;_wint32&#x27;</span><span class="c proj">UserInterface</span><span class="c file" style="transform:scaleX(0.969)">CWikiRenderTargetManag...</span><span class="c line">21</span></div>
<div class="row" style="top:503px;height:20px"><span class="ic" style="top:2px"><svg width="16" height="16" viewBox="0 0 16 16"><circle cx="8" cy="8" r="7.5" fill="#fff"/><circle cx="8" cy="8" r="6.6" fill="#E41400"/><path d="M5 5L11 11M11 5L5 11" stroke="#fff" stroke-width="2.2" stroke-linecap="square"/></svg></span><span class="c code">C2061</span><span class="c desc" style="transform:scaleX(0.976)">sözdizimi hatası: tanımlayıcı &#x27;_wint32&#x27;</span><span class="c proj">UserInterface</span><span class="c file" style="transform:scaleX(0.969)">CWikiRenderTargetManag...</span><span class="c line">22</span></div>
  </div>
  <div id="hdr">
    <div class="v" style="left:27px"></div>
    <div class="v" style="left:53px"></div>
    <div class="v" style="left:103px"></div>
    <div class="v" style="left:561px"></div>
    <div class="v" style="left:711px"></div>
    <div class="v" style="left:861px"></div>
    <div class="v" style="left:896px"></div>
    <div class="v" style="left:1021px"></div>
    <div class="v" style="left:1027px"></div>
    <div class="b"></div>
    <div class="abs" style="left:43px;top:2px;width:6px;height:1px;background:#A0A0A0"></div>
    <div class="abs" style="left:48px;top:2px;width:1px;height:6px;background:#A0A0A0"></div>
    <div class="abs" style="left:45px;top:4px;width:2px;height:2px;background:#808080"></div>
    <span class="h" style="left:57px">Kod</span>
    <span class="h" style="left:107px">Açıklama</span>
    <span class="h" style="left:565px">Proje</span>
    <span class="h" style="left:715px">Dosya</span>
    <span class="h" style="left:865px">Çi...</span>
    <span class="h" style="left:900px">Gizleme Durumu</span>
  </div>
</div>
<div id="sb">
  <div class="arrow" style="left:4px;top:6px;border-left-width:5px;border-right-width:5px;border-top:0;border-bottom:5px solid #999"></div>
  <div class="abs" style="left:4px;top:462px;width:9px;height:16px;background:#686868"></div>
  <div class="arrow" style="left:4px;top:510px;border-left-width:5px;border-right-width:5px;border-top:5px solid #999"></div>
</div>
<div class="abs" style="left:1060px;top:0;width:1px;height:596px;background:#3F3F46"></div>
<div class="abs" style="left:1061px;top:0;width:4px;height:19px;background:#2D2D30"></div>
<div class="abs" style="left:1061px;top:19px;width:4px;height:1px;background:#3F3F46"></div>
<div class="abs" style="left:1061px;top:20px;width:4px;height:20px;background:#333337"></div>
<div class="abs" style="left:1061px;top:40px;width:4px;height:218px;background:#252526"></div>
<div class="abs" style="left:1061px;top:258px;width:4px;height:19px;background:#3E3E42"></div>
<div class="abs" style="left:1061px;top:277px;width:4px;height:13px;background:#252526"></div>
<div class="abs" style="left:1061px;top:290px;width:4px;height:18px;background:#3E3E42"></div>
<div class="abs" style="left:1061px;top:308px;width:4px;height:20px;background:#252526;border:1px solid #3F3F46;border-right:0"></div>
<div class="abs" style="left:1061px;top:328px;width:4px;height:7px;background:#2D2D30"></div>
<div class="abs" style="left:1061px;top:335px;width:4px;height:1px;background:#46464A"></div>
<div class="abs" style="left:1061px;top:336px;width:4px;height:259px;background:#2D2D30"></div>
<div class="abs" style="left:1063px;top:383px;width:2px;height:23px;background:#1C86D8"></div>
<div class="abs" style="left:1063px;top:412px;width:2px;height:10px;background:#F1F1F1"></div>
<div class="abs" style="left:1060px;top:595px;width:5px;height:1px;background:#3F3F46"></div>
<div class="abs" style="left:1061px;top:596px;width:4px;height:3px;background:#2D2D30"></div>

<!-- bottom tabs -->
<div class="abs" style="left:77px;top:575px;width:959px;height:1px;background:#3F3F46"></div>
<div class="abs" style="left:6px;top:575px;width:72px;height:21px;background:#252526;border:1px solid #3F3F46;border-top:0"></div>
<span class="abs" style="left:12px;top:577px;line-height:16px;color:#3794E0;transform:scaleX(0.95);transform-origin:0 0">Hata Listesi</span>
<span class="abs" style="left:84px;top:577px;line-height:16px;transform:scaleX(0.95);transform-origin:0 0">Çıktı</span>

</body></html>
